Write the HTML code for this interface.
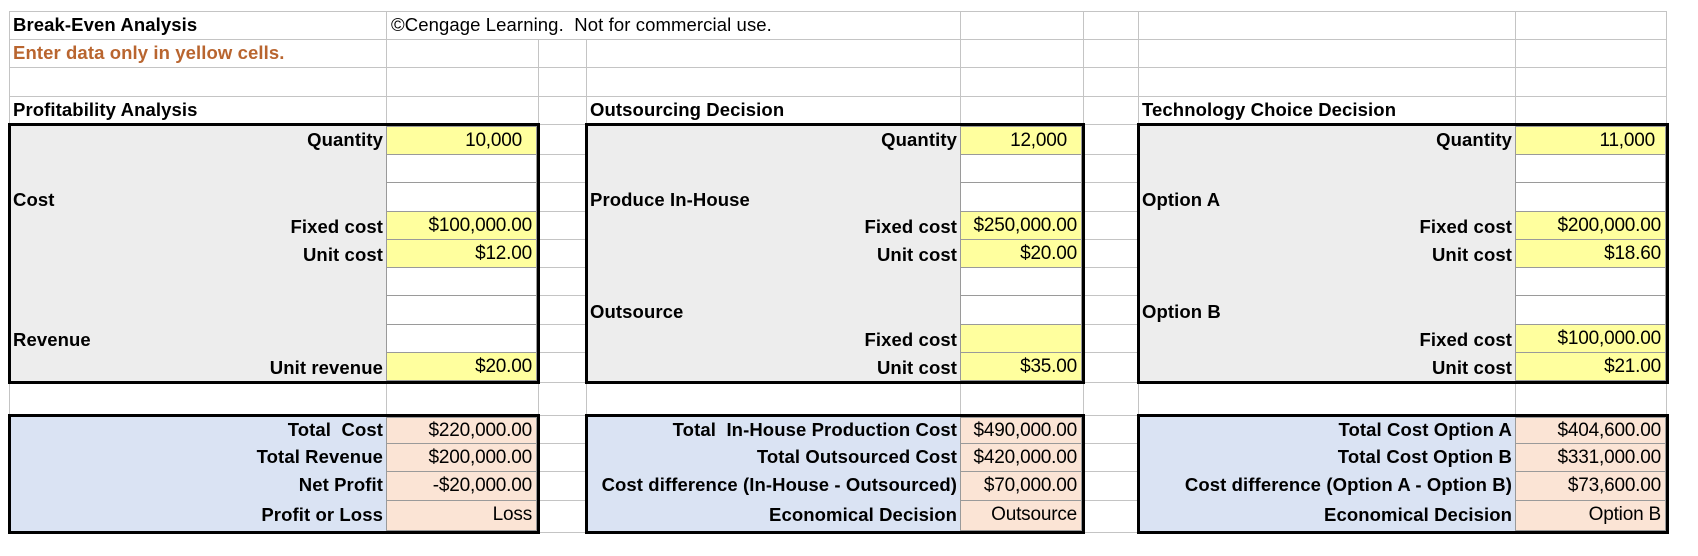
<!DOCTYPE html>
<html><head><meta charset="utf-8">
<style>
*{margin:0;padding:0;box-sizing:border-box}
body{width:1698px;height:556px;background:#fff;position:relative;overflow:hidden;font-family:"Liberation Sans",Arial,sans-serif;font-size:18.5px;color:#000}
.h{position:absolute;height:1px;background:#c4c4c4}
.v{position:absolute;width:1px;background:#c4c4c4}
.t{position:absolute;white-space:nowrap;line-height:22px;letter-spacing:0.1px}
.b{font-weight:bold}
.r{text-align:right}
.box{position:absolute;border:3px solid #000}
.cell{position:absolute;border:1px solid #9a9a9a;text-align:right;padding-right:4px;white-space:nowrap;line-height:27px;font-size:19px;letter-spacing:-0.2px}
.y{background:#ffff9e}.w{background:#fff}.p{background:#fbe4d5}
.lab{margin-top:2px}
</style></head><body>
<div class="h" style="left:9px;width:1658px;top:11px"></div>
<div class="h" style="left:9px;width:1658px;top:39px"></div>
<div class="h" style="left:9px;width:1658px;top:67px"></div>
<div class="h" style="left:9px;width:1658px;top:96px"></div>
<div class="h" style="left:9px;width:1658px;top:124px"></div>
<div class="h" style="left:9px;width:1658px;top:154px"></div>
<div class="h" style="left:9px;width:1658px;top:182px"></div>
<div class="h" style="left:9px;width:1658px;top:211px"></div>
<div class="h" style="left:9px;width:1658px;top:239px"></div>
<div class="h" style="left:9px;width:1658px;top:267px"></div>
<div class="h" style="left:9px;width:1658px;top:295px"></div>
<div class="h" style="left:9px;width:1658px;top:324px"></div>
<div class="h" style="left:9px;width:1658px;top:352px"></div>
<div class="h" style="left:9px;width:1658px;top:382px"></div>
<div class="h" style="left:9px;width:1658px;top:415px"></div>
<div class="h" style="left:9px;width:1658px;top:443px"></div>
<div class="h" style="left:9px;width:1658px;top:471px"></div>
<div class="h" style="left:9px;width:1658px;top:500px"></div>
<div class="h" style="left:9px;width:1658px;top:532px"></div>
<div class="v" style="left:9px;top:11px;height:521px"></div>
<div class="v" style="left:386px;top:11px;height:521px"></div>
<div class="v" style="left:538px;top:39px;height:493px"></div>
<div class="v" style="left:586px;top:39px;height:493px"></div>
<div class="v" style="left:960px;top:11px;height:521px"></div>
<div class="v" style="left:1083px;top:11px;height:521px"></div>
<div class="v" style="left:1138px;top:11px;height:521px"></div>
<div class="v" style="left:1515px;top:11px;height:521px"></div>
<div class="v" style="left:1666px;top:11px;height:521px"></div>

<div class="t b" style="left:13px;top:14px">Break-Even Analysis</div>
<div class="t" style="left:391px;top:14px">©Cengage Learning.&nbsp; Not for commercial use.</div>
<div class="t b" style="left:13px;top:42px;color:#b9652f">Enter data only in yellow cells.</div>
<div class="t b" style="left:13px;top:99px">Profitability Analysis</div>
<div class="t b" style="left:590px;top:99px">Outsourcing Decision</div>
<div class="t b" style="left:1142px;top:99px">Technology Choice Decision</div>

<div class="box" style="left:8px;top:123px;width:532px;height:261px;background:#ededed"></div>
<div class="cell y" style="left:386px;top:126px;width:151px;height:29px;padding-right:14px">10,000</div>
<div class="cell w" style="left:386px;top:154px;width:151px;height:29px"></div>
<div class="cell w" style="left:386px;top:182px;width:151px;height:30px"></div>
<div class="cell y" style="left:386px;top:211px;width:151px;height:29px">$100,000.00</div>
<div class="cell y" style="left:386px;top:239px;width:151px;height:29px">$12.00</div>
<div class="cell w" style="left:386px;top:267px;width:151px;height:29px"></div>
<div class="cell w" style="left:386px;top:295px;width:151px;height:30px"></div>
<div class="cell w" style="left:386px;top:324px;width:151px;height:29px"></div>
<div class="cell y" style="left:386px;top:352px;width:151px;height:29px">$20.00</div>
<div class="t b r lab" style="right:1315px;top:127px">Quantity</div>
<div class="t b lab" style="left:13px;top:187px">Cost</div>
<div class="t b r lab" style="right:1315px;top:214px">Fixed cost</div>
<div class="t b r lab" style="right:1315px;top:242px">Unit cost</div>
<div class="t b lab" style="left:13px;top:327px">Revenue</div>
<div class="t b r lab" style="right:1315px;top:355px">Unit revenue</div>

<div class="box" style="left:585px;top:123px;width:500px;height:261px;background:#ededed"></div>
<div class="cell y" style="left:960px;top:126px;width:122px;height:29px;padding-right:14px">12,000</div>
<div class="cell w" style="left:960px;top:154px;width:122px;height:29px"></div>
<div class="cell w" style="left:960px;top:182px;width:122px;height:30px"></div>
<div class="cell y" style="left:960px;top:211px;width:122px;height:29px">$250,000.00</div>
<div class="cell y" style="left:960px;top:239px;width:122px;height:29px">$20.00</div>
<div class="cell w" style="left:960px;top:267px;width:122px;height:29px"></div>
<div class="cell w" style="left:960px;top:295px;width:122px;height:30px"></div>
<div class="cell y" style="left:960px;top:324px;width:122px;height:29px"></div>
<div class="cell y" style="left:960px;top:352px;width:122px;height:29px">$35.00</div>
<div class="t b r lab" style="right:741px;top:127px">Quantity</div>
<div class="t b lab" style="left:590px;top:187px">Produce In-House</div>
<div class="t b r lab" style="right:741px;top:214px">Fixed cost</div>
<div class="t b r lab" style="right:741px;top:242px">Unit cost</div>
<div class="t b lab" style="left:590px;top:299px">Outsource</div>
<div class="t b r lab" style="right:741px;top:327px">Fixed cost</div>
<div class="t b r lab" style="right:741px;top:355px">Unit cost</div>

<div class="box" style="left:1137px;top:123px;width:532px;height:261px;background:#ededed"></div>
<div class="cell y" style="left:1515px;top:126px;width:151px;height:29px;padding-right:10px">11,000</div>
<div class="cell w" style="left:1515px;top:154px;width:151px;height:29px"></div>
<div class="cell w" style="left:1515px;top:182px;width:151px;height:30px"></div>
<div class="cell y" style="left:1515px;top:211px;width:151px;height:29px">$200,000.00</div>
<div class="cell y" style="left:1515px;top:239px;width:151px;height:29px">$18.60</div>
<div class="cell w" style="left:1515px;top:267px;width:151px;height:29px"></div>
<div class="cell w" style="left:1515px;top:295px;width:151px;height:30px"></div>
<div class="cell y" style="left:1515px;top:324px;width:151px;height:29px">$100,000.00</div>
<div class="cell y" style="left:1515px;top:352px;width:151px;height:29px">$21.00</div>
<div class="t b r lab" style="right:186px;top:127px">Quantity</div>
<div class="t b lab" style="left:1142px;top:187px">Option A</div>
<div class="t b r lab" style="right:186px;top:214px">Fixed cost</div>
<div class="t b r lab" style="right:186px;top:242px">Unit cost</div>
<div class="t b lab" style="left:1142px;top:299px">Option B</div>
<div class="t b r lab" style="right:186px;top:327px">Fixed cost</div>
<div class="t b r lab" style="right:186px;top:355px">Unit cost</div>

<div class="box" style="left:8px;top:414px;width:532px;height:120px;background:#dae3f3"></div>
<div class="cell p" style="left:386px;top:417px;width:151px;height:27px;line-height:25px">$220,000.00</div>
<div class="cell p" style="left:386px;top:443px;width:151px;height:29px">$200,000.00</div>
<div class="cell p" style="left:386px;top:471px;width:151px;height:30px">-$20,000.00</div>
<div class="cell p" style="left:386px;top:500px;width:151px;height:31px;line-height:28px">Loss</div>
<div class="t b r" style="right:1315px;top:419px">Total&nbsp; Cost</div>
<div class="t b r" style="right:1315px;top:446px">Total Revenue</div>
<div class="t b r" style="right:1315px;top:474px">Net Profit</div>
<div class="t b r" style="right:1315px;top:504px">Profit or Loss</div>

<div class="box" style="left:585px;top:414px;width:500px;height:120px;background:#dae3f3"></div>
<div class="cell p" style="left:960px;top:417px;width:122px;height:27px;line-height:25px">$490,000.00</div>
<div class="cell p" style="left:960px;top:443px;width:122px;height:29px">$420,000.00</div>
<div class="cell p" style="left:960px;top:471px;width:122px;height:30px">$70,000.00</div>
<div class="cell p" style="left:960px;top:500px;width:122px;height:31px;line-height:28px">Outsource</div>
<div class="t b r" style="right:741px;top:419px">Total&nbsp; In-House Production Cost</div>
<div class="t b r" style="right:741px;top:446px">Total Outsourced Cost</div>
<div class="t b r" style="right:741px;top:474px">Cost difference (In-House - Outsourced)</div>
<div class="t b r" style="right:741px;top:504px">Economical Decision</div>

<div class="box" style="left:1137px;top:414px;width:532px;height:120px;background:#dae3f3"></div>
<div class="cell p" style="left:1515px;top:417px;width:151px;height:27px;line-height:25px">$404,600.00</div>
<div class="cell p" style="left:1515px;top:443px;width:151px;height:29px">$331,000.00</div>
<div class="cell p" style="left:1515px;top:471px;width:151px;height:30px">$73,600.00</div>
<div class="cell p" style="left:1515px;top:500px;width:151px;height:31px;line-height:28px">Option B</div>
<div class="t b r" style="right:186px;top:419px">Total Cost Option A</div>
<div class="t b r" style="right:186px;top:446px">Total Cost Option B</div>
<div class="t b r" style="right:186px;top:474px">Cost difference (Option A - Option B)</div>
<div class="t b r" style="right:186px;top:504px">Economical Decision</div>
</body></html>
